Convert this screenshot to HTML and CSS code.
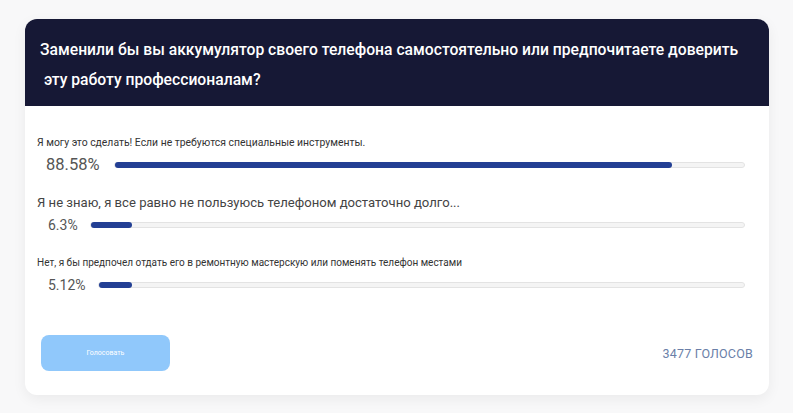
FILE: index.html
```html
<!DOCTYPE html>
<html lang="ru">
<head>
    <meta charset="UTF-8">
    <meta name="viewport" content="width=device-width, initial-scale=1.0">
    <title>Опрос</title>
    <link rel="stylesheet" href="styles.css">
</head>
<body>
    <div class="poll">
        <!-- вопрос -->
        <div class="poll-head">
            <h2 class="poll-title">
                <span class="line">Заменили бы вы аккумулятор своего телефона самостоятельно или предпочитаете доверить</span>
                <span class="line indent">эту работу профессионалам?</span>
            </h2>
        </div>

        <div class="poll-body">
            <div class="answer">
                <p class="answer-text small">Я могу это сделать! Если не требуются специальные инструменты.</p>
                <div class="answer-row">
                    <span class="percent big">88.58%</span>
                    <div class="track"><div class="fill" style="width: 88.58%"></div></div>
                </div>
            </div>

            <div class="answer">
                <p class="answer-text large">Я не знаю, я все равно не пользуюсь телефоном достаточно долго...</p>
                <div class="answer-row">
                    <span class="percent">6.3%</span>
                    <div class="track"><div class="fill" style="width: 6.3%"></div></div>
                </div>
            </div>

            <div class="answer">
                <p class="answer-text narrow">Нет, я бы предпочел отдать его в ремонтную мастерскую или поменять телефон местами</p>
                <div class="answer-row">
                    <span class="percent">5.12%</span>
                    <div class="track"><div class="fill" style="width: 5.12%"></div></div>
                </div>
            </div>
        </div>

        <div class="poll-foot">
            <button class="btn">Голосовать</button>
            <span class="votes">3477 голосов</span>
        </div>
    </div>
</body>
</html>
```

FILE: styles.css
```css
/* общие стили */
body {
    margin: 0;
    padding: 19px 24px 19px 25px;
    background-color: #f8f8f9;
    font-family: Roboto, "Liberation Sans", Arial, sans-serif;
    color: #444;
}
.poll {
    background: #fff;
    border-radius: 12px;
    box-shadow: 0px 4px 14px rgba(0, 0, 0, 0.06);
    overflow: hidden;
}
.poll-head {
    background-color: #161835;
    padding: 16px 8px 12px 15px;
    height: 59px;
}
.poll-title {
    margin: 0;
    color: #fff;
    font-size: 15.7px;
    font-weight: 500;
    line-height: 30px;
}
.poll-title .line {
    display: block;
    white-space: nowrap;
}
.poll-title .indent {
    padding-left: 4px;
}
.poll-body {
    padding: 29px 24px 0 12px;
}
.answer {
    margin-bottom: 21px;
}
.answer:last-child {
    margin-bottom: 0;
}
.answer-text {
    margin: 0;
    color: #333;
    line-height: 16px;
}
.answer-text.small {
    font-size: 10.4px;
}
.answer-text.large {
    font-size: 13.1px;
    color: #444;
}
.answer-text.narrow {
    font-size: 10px;
}
.answer-row {
    display: flex;
    align-items: center;
    gap: 12px;
    margin-top: 5px;
    padding-left: 11px;
}
.percent {
    font-size: 14px;
    color: #555;
    line-height: 18px;
}
.percent.big {
    font-size: 16.5px;
    margin-left: -2px;
    margin-right: 2px;
}
.track {
    flex: 1;
    height: 4px;
    background: #f4f4f4;
    border: 1px solid #e3e3e3;
    border-radius: 4px;
}
.fill {
    height: 6px;
    margin-top: -1px;
    background-color: #233f94;
    border-radius: 4px;
}
.poll-foot {
    display: flex;
    justify-content: space-between;
    align-items: center;
    padding: 41px 16px 24px 16px;
}
.btn {
    width: 129px;
    height: 36px;
    border: none;
    border-radius: 8px;
    background-color: #90c8fb;
    color: #fff;
    font-size: 7px;
    font-family: inherit;
}
.votes {
    font-size: 12.5px;
    color: #6b7fa8;
    text-transform: uppercase;
    letter-spacing: 0.2px;
}
```
